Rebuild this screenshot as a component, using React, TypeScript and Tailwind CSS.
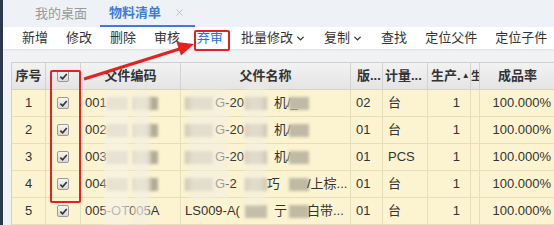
import React from 'react';
import { ChevronDown, X } from 'lucide-react';

const font = { fontFamily: '"Liberation Sans", "Noto Sans CJK SC", sans-serif' };

const cols = 'grid grid-cols-[34px_35px_100px_170px_32px_45px_43px_9px_75px]';

const rows = [
  { no: 1, code: '001-', name: 'G-20', name2: '机/_', ver: '02', unit: '台' },
  { no: 2, code: '002-', name: 'G-20', name2: '机/', ver: '01', unit: '台' },
  { no: 3, code: '003', name: 'G-20', name2: '机/s', ver: '01', unit: 'PCS' },
  { no: 4, code: '004', name: 'G-2', name2: '巧', tail: '/上棕...', ver: '01', unit: '台' },
  { no: 5, code: '005-OT005A', name: 'LS009-A(', name2: '亍', tail: '白带...', ver: '01', unit: '台' },
];

const Check = () => (
  <span className="inline-flex items-center justify-center w-[12px] h-[12px] rounded-[2px] border border-[#9a9a9a] bg-gradient-to-b from-[#f6f6f6] to-[#d8d8d8]">
    <svg width="9" height="9" viewBox="0 0 10 10">
      <path d="M1.5 5.2 L4 7.6 L8.6 2.2" fill="none" stroke="#333" strokeWidth="1.8" />
    </svg>
  </span>
);

const tools = ['新增', '修改', '删除', '审核'];

export default function App() {
  return (
    <div className="relative w-[554px] h-[225px] overflow-hidden bg-[#f1f2f4] text-[13px] text-[#333]" style={font}>
      <div className="flex h-full">
        <div className="w-[3px] bg-[#2c3a4b] shrink-0" />
        <div className="flex-1 flex flex-col min-w-0">
          {/* tabs */}
          <div className="h-[27px] flex items-end bg-[#eef1f5] pl-[32px] whitespace-nowrap">
            <div className="h-[27px] flex items-center text-[#9a9a9a] pr-[13px]">我的桌面</div>
            <div className="h-[27px] flex items-center pl-[9px] pr-[10px] gap-[13px] border-b-2 border-[#3b7ddd] text-[#3b7ddd]">
              <span className="font-bold">物料清单</span>
              <X className="w-[11px] h-[11px] text-[#b8bcc4]" strokeWidth={2} />
            </div>
          </div>
          {/* toolbar */}
          <div className="h-[28px] flex items-center bg-white whitespace-nowrap shadow-[0_1px_2px_rgba(0,0,0,0.08)]">
            {tools.map((t, i) => <span key={t} className={i === 0 ? 'ml-[19px]' : 'ml-[18px]'}>{t}</span>)}
            <span className="ml-[17px] text-[#2d6fe0]">弃审</span>
            <span className="ml-[18px] flex items-center gap-[2px]">批量修改<ChevronDown className="w-[11px] h-[11px]" strokeWidth={3} /></span>
            <span className="ml-[18px] flex items-center gap-[2px]">复制<ChevronDown className="w-[11px] h-[11px]" strokeWidth={3} /></span>
            <span className="ml-[18px]">查找</span>
            <span className="ml-[18px]">定位父件</span>
            <span className="ml-[18px]">定位子件</span>
          </div>
          {/* table */}
          <div className="pl-[8px] pt-[13px]">
            <div className="border-t border-l border-[#cfcfcf]">
              <div className={`${cols} h-[27px] bg-gradient-to-b from-[#f2f2f2] to-[#e4e4e4] font-bold text-[#333] whitespace-nowrap`}>
                <div className="flex items-center justify-center border-r border-b border-[#d2d2d2]">序号</div>
                <div className="flex items-center justify-center border-r border-b border-[#d2d2d2]"><Check /></div>
                <div className="flex items-center justify-center border-r border-b border-[#d2d2d2]">父件编码</div>
                <div className="flex items-center justify-center border-r border-b border-[#d2d2d2]">父件名称</div>
                <div className="flex items-center pl-[6px] border-r border-b border-[#d2d2d2]">版...</div>
                <div className="flex items-center pl-[2px] border-r border-b border-[#d2d2d2]">计量...</div>
                <div className="flex items-center pl-[3px] border-r border-b border-[#d2d2d2]">生产.<span className="text-[8px] ml-[1px]">▲</span></div>
                <div className="flex items-center border-r border-b border-[#d2d2d2] overflow-hidden text-[11px]">生</div>
                <div className="flex items-center justify-center border-b border-[#d2d2d2]">成品率</div>
              </div>
              {rows.map(r => (
                <div key={r.no} className={`${cols} h-[27px] bg-[#fcf4d0] whitespace-nowrap`}>
                  <div className="flex items-center justify-center border-r border-b border-[#e6ddb9]">{r.no}</div>
                  <div className="flex items-center justify-center border-r border-b border-[#e6ddb9]"><Check /></div>
                  <div className="relative flex items-center pl-[4px] border-r border-b border-[#e6ddb9] overflow-hidden">
                    <span>{r.code}</span>
                    {r.no < 5 && (
                      <>
                        <span className="absolute left-[26px] top-[7px] w-[20px] h-[13px] bg-[#c2bba6] blur-[1.5px]" />
                        <span className="absolute left-[52px] top-[7px] w-[18px] h-[13px] bg-[#ccc5b0] blur-[1.5px]" />
                        <span className="absolute left-[69px] top-[7px] w-[8px] h-[13px] bg-[#b3ac97] blur-[1.5px]" />
                      </>
                    )}
                  </div>
                  <div className="relative flex items-center border-r border-b border-[#e6ddb9] overflow-hidden">
                    {r.no < 5 && <span className="absolute left-[4px] top-[7px] w-[28px] h-[13px] bg-[#cbc4ae] blur-[1.5px]" />}
                    <span className={r.no === 5 ? 'ml-[4px]' : 'ml-[34px]'}>{r.name}</span>
                    <span className="absolute left-[64px] top-[7px] w-[22px] h-[13px] bg-[#c4bda8] blur-[1.5px]" />
                    <span className={r.no === 5 ? 'ml-[34px]' : 'ml-[30px]'}>{r.name2}</span>
                    <span className="absolute left-[108px] top-[7px] w-[20px] h-[13px] bg-[#c0b9a4] blur-[1.5px]" />
                    {r.tail && <span className="absolute left-[126px]">{r.tail}</span>}
                  </div>
                  <div className="flex items-center pl-[5px] border-r border-b border-[#e6ddb9]">{r.ver}</div>
                  <div className="flex items-center pl-[5px] border-r border-b border-[#e6ddb9]">{r.unit}</div>
                  <div className="flex items-center justify-end pr-[10px] border-r border-b border-[#e6ddb9]">1</div>
                  <div className="border-r border-b border-[#e6ddb9]" />
                  <div className="flex items-center justify-end pr-[4px] border-b border-[#e6ddb9]">100.000%</div>
                </div>
              ))}
            </div>
          </div>
        </div>
      </div>

      {/* mosaic overlays */}
      <div className="absolute left-[104px] top-[92px] w-[25px] h-[133px] bg-[#f6f2e6]/70 blur-[2px] pointer-events-none" />
      <div className="absolute left-[133px] top-[92px] w-[16px] h-[133px] bg-[#f3efe2]/70 blur-[2px] pointer-events-none" />
      <div className="absolute left-[188px] top-[90px] w-[40px] h-[110px] bg-[#f3efe3]/60 blur-[3px] pointer-events-none" />
      <div className="absolute left-[245px] top-[85px] w-[20px] h-[120px] bg-[#f3efe3]/60 blur-[3px] pointer-events-none" />

      {/* annotations */}
      <div className="absolute left-[194px] top-[30px] w-[36px] h-[21px] border-2 border-[#e5201f] rounded-[2px] pointer-events-none" />
      <div className="absolute left-[50px] top-[70px] w-[31px] h-[133px] border-2 border-[#e5201f] rounded-[2px] pointer-events-none" />
      <svg className="absolute left-0 top-0 pointer-events-none" width="554" height="225">
        <line x1="84" y1="79" x2="181" y2="48.5" stroke="#e5201f" strokeWidth="3" />
        <polygon points="194,44 181,55.5 176.5,42" fill="#e5201f" />
      </svg>
    </div>
  );
}
